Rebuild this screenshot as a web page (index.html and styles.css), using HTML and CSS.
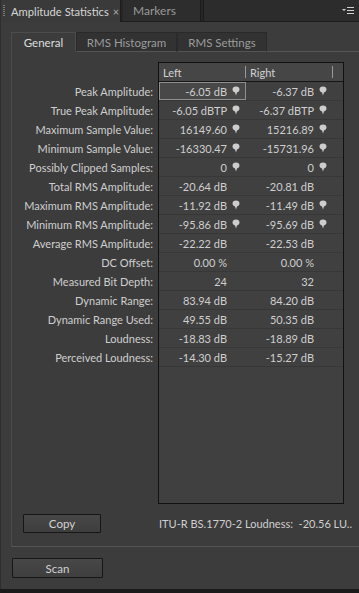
FILE: index.html
```html
<!DOCTYPE html>
<html lang="en">
<head>
    <meta charset="UTF-8" />
    <title>Amplitude Statistics</title>
    <link rel="stylesheet" href="styles.css">
</head>
<body>
    <div class="panel">
        <div class="panel-bar">
            <div class="panel-tab active">
                <span class="grip"></span>
                <span>Amplitude Statistics</span>
                <span class="close">×</span>
            </div>
            <div class="panel-tab">Markers</div>
            <div class="bar-fill">
                <svg class="menu-icon" width="12" height="9" viewBox="0 0 12 9">
                    <path d="M0 3h4l-2 2z" fill="#cfcfcf"/>
                    <rect x="5" y="1" width="7" height="1" fill="#cfcfcf"/>
                    <rect x="5" y="4" width="7" height="1" fill="#cfcfcf"/>
                    <rect x="5" y="7" width="7" height="1" fill="#cfcfcf"/>
                </svg>
            </div>
        </div>

        <div class="panel-body">
            <div class="tabs">
                <div class="tab active">General</div>
                <div class="tab">RMS Histogram</div>
                <div class="tab">RMS Settings</div>
                <div class="tab-rest"></div>
            </div>

            <div class="tab-page">
                <div class="stats">
                    <div class="labels">
                        <div>Peak Amplitude:</div>
                        <div>True Peak Amplitude:</div>
                        <div>Maximum Sample Value:</div>
                        <div>Minimum Sample Value:</div>
                        <div>Possibly Clipped Samples:</div>
                        <div>Total RMS Amplitude:</div>
                        <div>Maximum RMS Amplitude:</div>
                        <div>Minimum RMS Amplitude:</div>
                        <div>Average RMS Amplitude:</div>
                        <div>DC Offset:</div>
                        <div>Measured Bit Depth:</div>
                        <div>Dynamic Range:</div>
                        <div>Dynamic Range Used:</div>
                        <div>Loudness:</div>
                        <div>Perceived Loudness:</div>
                    </div>

                    <div class="table">
                        <div class="row head">
                            <div class="cell">Left</div>
                            <div class="cell">Right</div>
                        </div>
                        <div id="rows"></div>
                    </div>
                </div>

                <div class="footer">
                    <button class="btn copy">Copy</button>
                    <span class="loudness">ITU-R BS.1770-2 Loudness: &nbsp;-20.56 LU..</span>
                </div>
            </div>

            <button class="btn scan">Scan</button>
        </div>
    </div>

<script>
    // [left, right, has pin]
    const data = [
        ['-6.05 dB', '-6.37 dB', true],
        ['-6.05 dBTP', '-6.37 dBTP', true],
        ['16149.60', '15216.89', true],
        ['-16330.47', '-15731.96', true],
        ['0', '0', true],
        ['-20.64 dB', '-20.81 dB', false],
        ['-11.92 dB', '-11.49 dB', true],
        ['-95.86 dB', '-95.69 dB', true],
        ['-22.22 dB', '-22.53 dB', false],
        ['0.00 %', '0.00 %', false],
        ['24', '32', false],
        ['83.94 dB', '84.20 dB', false],
        ['49.55 dB', '50.35 dB', false],
        ['-18.83 dB', '-18.89 dB', false],
        ['-14.30 dB', '-15.27 dB', false]
    ];

    const pin = '<svg class="pin" width="8" height="10" viewBox="0 0 8 10"><path d="M4 0.5C6.2 0.5 7.5 1.7 7.5 3.6C7.5 5.2 6.3 6.2 5 6.5L4 9.5L3 6.5C1.7 6.2 0.5 5.2 0.5 3.6C0.5 1.7 1.8 0.5 4 0.5Z" fill="#cdcdcd"/></svg>';

    const rows = document.getElementById('rows');
    data.forEach((d, i) => {
        const row = document.createElement('div');
        row.className = 'row';
        const p = d[2] ? pin : '<span class="pin"></span>';
        row.innerHTML =
            `<div class="cell${i === 0 ? ' selected' : ''}"><span>${d[0]}</span>${p}</div>` +
            `<div class="cell"><span>${d[1]}</span>${p}</div>`;
        rows.appendChild(row);
    });
</script>
</body>
</html>
```

FILE: styles.css
```css
* {
    box-sizing: border-box;
    margin: 0;
    padding: 0;
}
body {
    font-family: 'Lato', 'Open Sans', sans-serif;
    font-size: 11px;
    color: #cfcfcf;
    background: #1a1a1a;
    width: 359px;
    height: 593px;
    overflow: hidden;
}
.panel {
    height: 589px;
    background: #3c3c3c;
    display: flex;
    flex-direction: column;
    border-left: 1px solid #2e2e2e;
}
.panel-bar {
    display: flex;
    height: 22px;
    background: #262626;
    border-bottom: 1px solid #1c1c1c;
}
.panel-tab {
    display: flex;
    align-items: center;
    padding: 0 10px;
    font-size: 12px;
    color: #9a9a9a;
    background: #2d2d2d;
    border-right: 1px solid #1c1c1c;
    margin-right: 2px;
    width: 78px;
    white-space: nowrap;
}
.panel-tab.active {
    width: 120px;
    padding-left: 2px;
    font-size: 11.2px;
    color: #d6d6d6;
    background: #3a3a3a;
    margin-bottom: -1px;
}
.grip {
    width: 2px;
    height: 12px;
    margin-right: 6px;
    flex-shrink: 0;
    background: repeating-linear-gradient(180deg, #7a7a7a 0 1px, transparent 1px 2px);
}
.close {
    margin-left: 4px;
    font-size: 11px;
    color: #aaa;
}
.bar-fill {
    flex: 1;
    display: flex;
    justify-content: flex-end;
    align-items: center;
    padding-right: 5px;
    background: #2c2c2c;
    border-left: 1px solid #1c1c1c;
}
.panel-body {
    flex: 1;
    padding: 10px 0 0 10px;
    display: flex;
    flex-direction: column;
}
.tabs {
    display: flex;
    height: 20px;
}
.tab {
    display: flex;
    align-items: center;
    justify-content: center;
    font-size: 11.5px;
    color: #9c9c9c;
    background: #323232;
    border: 1px solid #2a2a2a;
    border-bottom: 1px solid #555;
    white-space: nowrap;
}
.tab.active {
    width: 65px;
    color: #dedede;
    background: #3c3c3c;
    border: 1px solid #4c4c4c;
    border-bottom: none;
}
.tab:nth-child(2) {
    width: 101px;
}
.tab:nth-child(3) {
    width: 90px;
}
.tab-rest {
    flex: 1;
    border-bottom: 1px solid #555;
}
.tab-page {
    height: 495px;
    border-left: 1px solid #4c4c4c;
    border-bottom: 1px solid #555;
    padding-top: 10px;
    display: flex;
    flex-direction: column;
}
.stats {
    display: flex;
    height: 442px;
}
.labels {
    width: 146px;
    padding-top: 20px;
    text-align: right;
    padding-right: 5px;
}
.labels div {
    height: 19px;
    line-height: 19px;
    white-space: nowrap;
}
.table {
    width: 186px;
    border: 1px solid #111;
    background: #404040;
}
.row {
    display: flex;
    height: 19px;
    border-bottom: 1px solid #373737;
}
.row.head {
    height: 19px;
    background: #464646;
    border-bottom: 1px solid #161616;
    padding-right: 9px;
}
.head .cell {
    justify-content: flex-start;
    padding: 0 0 0 4px;
    color: #d2d2d2;
    position: relative;
}
.head .cell::after {
    content: '';
    position: absolute;
    right: 0;
    top: 3px;
    bottom: 3px;
    width: 1px;
    background: #9a9a9a;
}
.cell {
    width: 87px;
    display: flex;
    align-items: center;
    justify-content: flex-end;
    padding-right: 6px;
    white-space: nowrap;
}
.cell.selected {
    background: #484848;
    border: 1px solid #8f8f8f;
    padding-right: 5px;
}
.pin {
    width: 8px;
    height: 10px;
    margin-left: 5px;
    flex-shrink: 0;
}
.footer {
    display: flex;
    align-items: center;
    padding: 10px 0 0 11px;
}
.btn {
    font-family: 'Lato', 'Open Sans', sans-serif;
    font-size: 11.5px;
    color: #d2d2d2;
    background: linear-gradient(#474747, #3e3e3e);
    border: 1px solid #161616;
    border-radius: 1px;
    height: 19px;
}
.copy {
    width: 78px;
}
.loudness {
    margin-left: 58px;
    white-space: nowrap;
}
.scan {
    width: 91px;
    margin: 11px 0 0 1px;
    height: 20px;
}
```
